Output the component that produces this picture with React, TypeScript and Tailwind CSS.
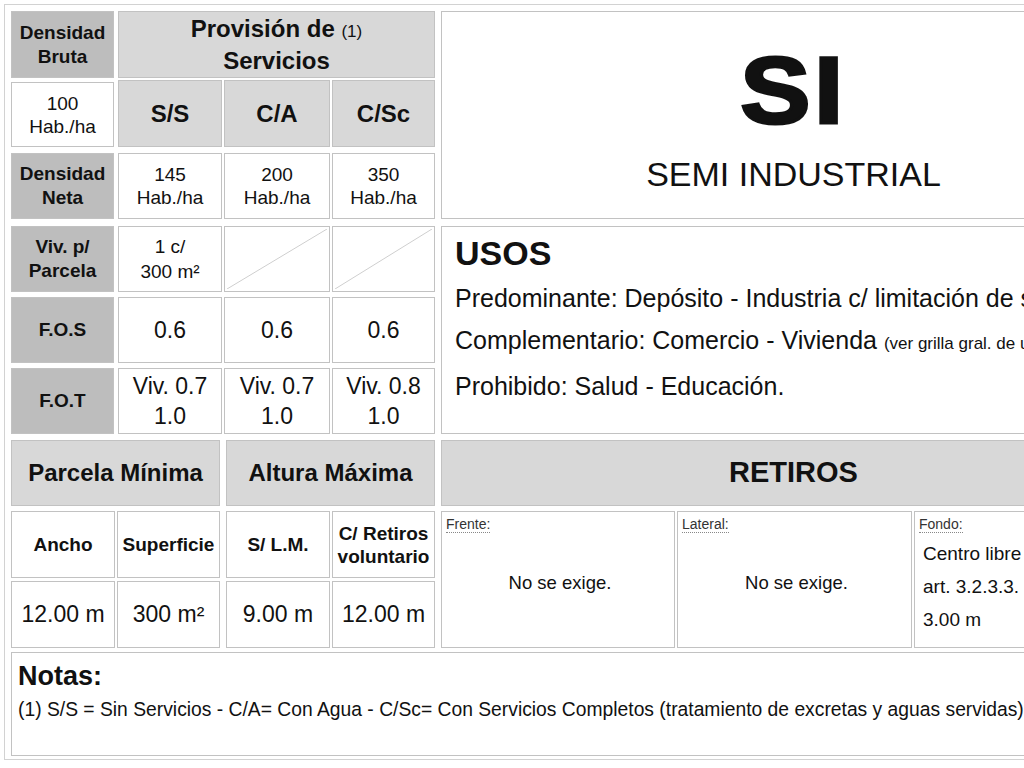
import React from "react";

const line = "border border-[#c2c2c2]";
const center = "flex flex-col items-center justify-center text-center";

function Cell({ className = "", children }: { className?: string; children?: React.ReactNode }) {
  return <div className={`${line} ${center} ${className}`}>{children}</div>;
}

function Label({ className = "", children }: { className?: string; children?: React.ReactNode }) {
  return (
    <Cell className={`bg-[#bdbdbd] text-[19px] font-bold leading-[24px] ${className}`}>
      {children}
    </Cell>
  );
}

function Slash() {
  return (
    <div className={`${line} h-full min-h-0 overflow-hidden p-[2px]`}>
      <svg className="block h-full w-full" viewBox="0 0 100 100" preserveAspectRatio="none">
        <line x1="0" y1="100" x2="100" y2="0" stroke="#cfcfcf" strokeWidth="1" vectorEffect="non-scaling-stroke" />
      </svg>
    </div>
  );
}

function ValueRow({
  label,
  values,
  className = "",
  size = "text-[23px] leading-[30px]",
}: {
  label: React.ReactNode;
  values: React.ReactNode[];
  className?: string;
  size?: string;
}) {
  return (
    <div className={`flex h-[66px] gap-[4px] ${className}`}>
      <Label className="w-[103px]">{label}</Label>
      <div className="grid w-[317px] grid-cols-[104px_106px_103px] grid-rows-[minmax(0,1fr)] gap-[2px]">
        {values.map((v, i) =>
          v === null ? (
            <Slash key={i} />
          ) : (
            <Cell key={i} className={size}>
              {v}
            </Cell>
          )
        )}
      </div>
    </div>
  );
}

function SubLabel({ children }: { children: React.ReactNode }) {
  return <span className="border-b border-dotted border-[#888] text-[14px] leading-[16px] text-[#333]">{children}</span>;
}

export default function App() {
  return (
    <div className="h-[768px] w-[1024px] overflow-hidden bg-white font-['Liberation_Sans',Arial,sans-serif] text-[#111]">
      <div className="ml-[4px] mt-[4px] w-[1149px] border border-[#d2d2d2] px-[6px] pb-[3px] pt-[6px]">
        {/* top section */}
        <div className="flex gap-[6px]">
          <div className="flex w-[424px] flex-col">
            <div className="flex h-[136px] gap-[4px]">
              <div className="flex w-[103px] flex-col gap-[4px]">
                <Label className="h-[67px]">
                  Densidad
                  <br />
                  Bruta
                </Label>
                <Cell className="h-[65px] text-[19px] leading-[23px]">
                  100
                  <br />
                  Hab./ha
                </Cell>
              </div>
              <div className="flex w-[317px] flex-col gap-[2px]">
                <Cell className="h-[67px] bg-[#d8d8d8] text-[24px] font-bold leading-[29px]">
                  <span>
                    Provisión de <span className="text-[17px] font-normal">(1)</span>
                  </span>
                  <span>Servicios</span>
                </Cell>
                <div className="grid h-[67px] grid-cols-[104px_106px_103px] gap-[2px]">
                  {["S/S", "C/A", "C/Sc"].map((s) => (
                    <Cell key={s} className="bg-[#d8d8d8] text-[24px] font-bold">
                      {s}
                    </Cell>
                  ))}
                </div>
              </div>
            </div>

            <ValueRow
              className="mt-[6px]"
              size="text-[19px] leading-[23px]"
              label={
                <>
                  Densidad
                  <br />
                  Neta
                </>
              }
              values={["145", "200", "350"].map((n) => (
                <>
                  {n}
                  <br />
                  Hab./ha
                </>
              ))}
            />
            <ValueRow
              className="mt-[7px]"
              size="text-[19px] leading-[25px]"
              label={
                <>
                  Viv. p/
                  <br />
                  Parcela
                </>
              }
              values={[
                <>
                  1 c/
                  <br />
                  300 m²
                </>,
                null,
                null,
              ]}
            />
            <ValueRow className="mt-[5px]" label="F.O.S" values={["0.6", "0.6", "0.6"]} />
            <ValueRow
              className="mt-[5px]"
              label="F.O.T"
              values={["0.7", "0.7", "0.8"].map((n) => (
                <>
                  Viv. {n}
                  <br />
                  1.0
                </>
              ))}
            />
          </div>

          <div className="flex w-[705px] flex-col gap-[7px]">
            <div className={`${line} flex h-[208px] flex-col items-center pt-[32px]`}>
              <div className="scale-x-[1.12] text-[94px] font-bold leading-none tracking-[3px] [-webkit-text-stroke:3px_#111]">
                SI
              </div>
              <div className="mt-[19px] text-[34px] leading-none">SEMI INDUSTRIAL</div>
            </div>
            <div className={`${line} h-[208px] whitespace-nowrap pl-[13px] pt-[9px]`}>
              <div className="text-[34px] font-bold leading-none">USOS</div>
              <div className="mt-[7px] text-[25px] leading-[42px]">
                <div>Predominante: Depósito - Industria c/ limitación de superficie</div>
                <div>
                  Complementario: Comercio - Vivienda <span className="text-[17px]">(ver grilla gral. de usos)</span>
                </div>
                <div>Prohibido: Salud - Educación.</div>
              </div>
            </div>
          </div>
        </div>

        {/* bottom section */}
        <div className="mt-[6px] flex gap-[6px]">
          {[
            { title: "Parcela Mínima", heads: ["Ancho", "Superficie"], vals: ["12.00 m", "300 m²"] },
            { title: "Altura Máxima", heads: ["S/ L.M.", "C/ Retiros\nvoluntario"], vals: ["9.00 m", "12.00 m"] },
          ].map((g) => (
            <div key={g.title} className="flex w-[209px] flex-col">
              <Cell className="h-[66px] bg-[#d8d8d8] text-[24px] font-bold">{g.title}</Cell>
              <div className="mt-[5px] grid h-[67px] grid-cols-[104px_103px] gap-[2px]">
                {g.heads.map((h) => (
                  <Cell key={h} className="whitespace-pre-line text-[19px] font-bold leading-[23px]">
                    {h}
                  </Cell>
                ))}
              </div>
              <div className="mt-[3px] grid h-[67px] grid-cols-[104px_103px] gap-[2px]">
                {g.vals.map((v) => (
                  <Cell key={v} className="text-[23px]">
                    {v}
                  </Cell>
                ))}
              </div>
            </div>
          ))}

          <div className="flex w-[705px] flex-col">
            <Cell className="h-[66px] bg-[#d8d8d8] text-[29px] font-bold">RETIROS</Cell>
            <div className="mt-[5px] grid h-[137px] grid-cols-[234px_235px_232px] gap-[2px]">
              {["Frente:", "Lateral:"].map((l) => (
                <div key={l} className={`${line} flex flex-col pl-[4px] pt-0`}>
                  <div>
                    <SubLabel>{l}</SubLabel>
                  </div>
                  <div className="mt-[36px] text-center text-[18.5px] leading-[22px]">No se exige.</div>
                </div>
              ))}
              <div className={`${line} flex flex-col whitespace-nowrap pl-[4px] pt-0`}>
                <div>
                  <SubLabel>Fondo:</SubLabel>
                </div>
                <div className="mt-[1px] pl-[4px] text-[19px] leading-[33px]">
                  <div>Centro libre</div>
                  <div>art. 3.2.3.3. -</div>
                  <div>3.00 m</div>
                </div>
              </div>
            </div>
          </div>
        </div>

        {/* notes */}
        <div className={`${line} mt-[4px] h-[104px] whitespace-nowrap pl-[6px] pt-[10px]`}>
          <div className="text-[27px] font-bold leading-none">Notas:</div>
          <div className="mt-[10px] text-[19.3px] leading-none">
            (1) S/S = Sin Servicios - C/A= Con Agua - C/Sc= Con Servicios Completos (tratamiento de excretas y aguas servidas)
          </div>
        </div>
      </div>
    </div>
  );
}
